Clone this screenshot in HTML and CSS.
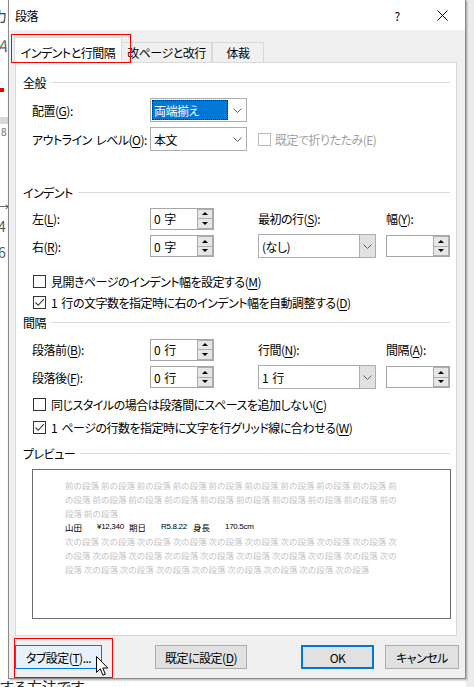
FILE: index.html
```html
<!DOCTYPE html>
<html lang="ja">
<head>
<meta charset="utf-8">
<title>段落</title>
<link rel="stylesheet" href="styles.css">
</head>
<body>
<div class="desk">
  <div class="doc">
    <span class="frag f-ka">カ</span>
    <span class="frag f-a">A</span>
    <span class="frag f-red"></span>
    <span class="frag f-bar"></span>
    <span class="frag f-8">8</span>
    <span class="frag f-arrow">→</span>
    <span class="frag f-4">4</span>
    <span class="frag f-6">6</span>
    <span class="frag f-bottom">する方法です。</span>
  </div>

  <div class="dialog">
    <div class="titlebar">
      <span class="title">段落</span>
      <div class="tb-btns">
        <span class="tb-btn help">?</span>
        <span class="tb-btn close"><svg width="11" height="11" viewBox="0 0 11 11"><path d="M0.5 0.5 L10.5 10.5 M10.5 0.5 L0.5 10.5" stroke="#000" stroke-width="1" fill="none"/></svg></span>
      </div>
    </div>

    <div class="tabs">
      <div class="tab active w1">インデントと行間隔</div>
      <div class="tab w2">改ページと改行</div>
      <div class="tab w3">体裁</div>
    </div>

    <div class="panel">
      <div class="hdr h1"><span>全般</span></div>
      <div class="row r-align">
        <span class="lbl">配置(<u>G</u>):</span>
        <div class="combo cw1 span3"><span class="selbox"><span class="sel">両端揃え</span></span><span class="arrow plain"><svg width="9" height="5" viewBox="0 0 9 5"><path d="M0.5 0.5 L4.5 4.5 L8.5 0.5" stroke="#606060" fill="none"/></svg></span></div>
      </div>
      <div class="row r-outline">
        <span class="lbl">アウトライン レベル(<u>O</u>):</span>
        <div class="combo cw1"><span class="txt">本文</span><span class="arrow plain"><svg width="9" height="5" viewBox="0 0 9 5"><path d="M0.5 0.5 L4.5 4.5 L8.5 0.5" stroke="#606060" fill="none"/></svg></span></div>
        <div class="cbi disabled span2"><span class="box"></span><span>既定で折りたたみ(E)</span></div>
      </div>

      <div class="hdr h2"><span>インデント</span></div>
      <div class="row r-left">
        <span class="lbl">左(<u>L</u>):</span>
        <div class="spin"><span class="val">0 字</span><span class="sbtns"><span class="sb up"></span><span class="sb dn"></span></span></div>
        <span class="lbl">最初の行(<u>S</u>):</span>
        <span class="lbl">幅(<u>Y</u>):</span>
      </div>
      <div class="row r-right">
        <span class="lbl">右(<u>R</u>):</span>
        <div class="spin"><span class="val">0 字</span><span class="sbtns"><span class="sb up"></span><span class="sb dn"></span></span></div>
        <div class="combo cw2"><span class="txt">(なし)</span><span class="arrow btn-arrow"><svg width="9" height="5" viewBox="0 0 9 5"><path d="M0.5 0.5 L4.5 4.5 L8.5 0.5" stroke="#606060" fill="none"/></svg></span></div>
        <div class="spin"><span class="val"></span><span class="sbtns"><span class="sb up"></span><span class="sb dn"></span></span></div>
      </div>
      <div class="cb c1"><span class="box"></span><span>見開きページのインデント幅を設定する(<u>M</u>)</span></div>
      <div class="cb c2"><span class="box"><svg width="11" height="11" viewBox="0 0 11 11"><path d="M1.5 5.5 L4.2 8.3 L9.8 2.2" stroke="#333" stroke-width="1.1" fill="none"/></svg></span><span>1 行の文字数を指定時に右のインデント幅を自動調整する(<u>D</u>)</span></div>

      <div class="hdr h3"><span>間隔</span></div>
      <div class="row r-before">
        <span class="lbl">段落前(<u>B</u>):</span>
        <div class="spin"><span class="val">0 行</span><span class="sbtns"><span class="sb up"></span><span class="sb dn"></span></span></div>
        <span class="lbl">行間(<u>N</u>):</span>
        <span class="lbl">間隔(<u>A</u>):</span>
      </div>
      <div class="row r-after">
        <span class="lbl">段落後(<u>F</u>):</span>
        <div class="spin"><span class="val">0 行</span><span class="sbtns"><span class="sb up"></span><span class="sb dn"></span></span></div>
        <div class="combo cw2"><span class="txt">1 行</span><span class="arrow btn-arrow"><svg width="9" height="5" viewBox="0 0 9 5"><path d="M0.5 0.5 L4.5 4.5 L8.5 0.5" stroke="#606060" fill="none"/></svg></span></div>
        <div class="spin"><span class="val"></span><span class="sbtns"><span class="sb up"></span><span class="sb dn"></span></span></div>
      </div>
      <div class="cb c3"><span class="box"></span><span>同じスタイルの場合は段落間にスペースを追加しない(<u>C</u>)</span></div>
      <div class="cb c4"><span class="box"><svg width="11" height="11" viewBox="0 0 11 11"><path d="M1.5 5.5 L4.2 8.3 L9.8 2.2" stroke="#333" stroke-width="1.1" fill="none"/></svg></span><span>1 ページの行数を指定時に文字を行グリッド線に合わせる(<u>W</u>)</span></div>

      <div class="hdr h4"><span>プレビュー</span></div>
      <div class="preview">
        <div class="pl">前の段落 前の段落 前の段落 前の段落 前の段落 前の段落 前の段落 前の段落 前の段落 前</div>
        <div class="pl">の段落 前の段落 前の段落 前の段落 前の段落 前の段落 前の段落 前の段落 前の段落 前の</div>
        <div class="pl">段落 前の段落</div>
        <div class="pl main"><span class="cell">山田</span><span class="cell lat">¥12,340</span><span class="cell">期日</span><span class="cell lat">R5.8.22</span><span class="cell">身長</span><span class="cell lat">170.5cm</span></div>
        <div class="pl">次の段落 次の段落 次の段落 次の段落 次の段落 次の段落 次の段落 次の段落 次の段落 次</div>
        <div class="pl">の段落 次の段落 次の段落 次の段落 次の段落 次の段落 次の段落 次の段落 次の段落 次の</div>
        <div class="pl">段落 次の段落 次の段落 次の段落 次の段落 次の段落 次の段落 次の段落 次の段落</div>
      </div>
    </div>

    <div class="buttons">
      <div class="btn b-tab hover">タブ設定(<u>T</u>)...</div>
      <div class="btn b-def">既定に設定(<u>D</u>)</div>
      <div class="btn b-ok">OK</div>
      <div class="btn b-cancel">キャンセル</div>
    </div>
  </div>

  <div class="mark mark-tab"></div>
  <div class="mark mark-btn"></div>
  <svg class="cursor" width="13" height="21" viewBox="0 0 13 21"><path d="M0.5 0.5 L0.5 16.5 L4.3 12.8 L6.9 19.2 L9.3 18.2 L6.8 12 L11.8 12 Z" fill="#fff" stroke="#000" stroke-width="1" stroke-linejoin="miter"/></svg>
</div>
</body>
</html>
```

FILE: styles.css
```css
* { box-sizing: border-box; }
html, body { margin: 0; padding: 0; }
body {
  width: 474px;
  height: 687px;
  overflow: hidden;
  background: #fff;
  font-family: "Noto Sans CJK JP", "Noto Sans", sans-serif;
  font-size: 12px;
  color: #000;
  font-feature-settings: "palt";
  letter-spacing: -0.5px;
  word-spacing: 2px;
}
u { text-decoration-thickness: 1px; text-underline-offset: 2px; }

.desk {
  position: relative;
  width: 474px;
  height: 687px;
  overflow: hidden;
  background: linear-gradient(to right, #fff 0, #fff 466px, #ececec 466px);
}

/* document fragments behind the dialog */
.frag { position: absolute; color: #444; line-height: 1; white-space: nowrap; letter-spacing: 0; word-spacing: 0; }
.f-ka { left: -7px; top: 8px; font-size: 15px; }
.f-a { left: -3px; top: 37px; font-size: 16px; font-style: italic; color: #666; }
.f-red { left: 0; top: 88px; width: 4px; height: 4px; background: #e00; }
.f-bar { left: 0; top: 117px; width: 8px; height: 7px; background: #d8d8d8; }
.f-8 { left: 1px; top: 127px; font-size: 10px; color: #666; }
.f-arrow { left: -1px; top: 202px; font-size: 10px; }
.f-4 { left: -2px; top: 219px; font-size: 14px; color: #555; }
.f-6 { left: -2px; top: 245px; font-size: 14px; color: #555; }
.f-bottom { left: 0; top: 679px; font-size: 15px; color: #222; }

/* dialog window */
.dialog {
  position: absolute;
  left: 8px;
  top: 0;
  width: 458px;
  height: 679px;
  background: #f0f0f0;
  border: 1px solid #8a8a8a;
  border-top: none;
  box-shadow: 1px 1px 2px rgba(0, 0, 0, 0.35);
  display: flex;
  flex-direction: column;
}
.titlebar {
  height: 30px;
  flex: none;
  background: #fff;
  display: flex;
  align-items: center;
  justify-content: space-between;
  padding-left: 6px;
}
.title { font-size: 12px; }
.tb-btns { display: flex; height: 30px; }
.tb-btn { display: flex; align-items: center; justify-content: center; height: 30px; }
.help { width: 46px; font-size: 12px; }
.close { width: 45px; }

/* tabs */
.tabs {
  height: 32px;
  flex: none;
  display: flex;
  align-items: flex-end;
  padding-left: 5px;
}
.tab {
  height: 20px;
  line-height: 19px;
  border: 1px solid #d9d9d9;
  border-bottom: none;
  background: #f0f0f0;
  text-align: center;
  white-space: nowrap;
}
.tab.active {
  height: 26px;
  padding-top: 5px;
  margin-bottom: -1px;
  background: #fff;
  position: relative;
  z-index: 1;
}
.w1 { width: 108px; }
.w2 { width: 90px; border-left: none; }
.w3 { width: 52px; }

/* tab panel */
.panel {
  flex: none;
  margin-left: 6px;
  width: 442px;
  height: 574px;
  background: #fff;
  border: 1px solid #d9d9d9;
  padding-right: 6px;
}
.hdr {
  display: flex;
  align-items: center;
  height: 20px;
  padding-left: 7px;
  white-space: nowrap;
}
.hdr::after {
  content: "";
  flex: 1;
  height: 1px;
  background: #dcdcdc;
  margin-left: 5px;
}
.h1 { margin-top: 9px; }
.h2 { margin-top: 31px; }
.h3 { margin-top: 0; }
.h4 { margin-top: 6px; }

.row {
  display: grid;
  grid-template-columns: 118px 108px 128px 64px;
  align-items: center;
  padding-left: 16px;
  white-space: nowrap;
}
.lbl { white-space: nowrap; }
.span2 { grid-column: span 2; }
.span3 { grid-column: span 3; }
.r-align { margin-top: 6px; height: 24px; }
.r-outline { margin-top: 5px; height: 24px; }
.r-left { margin-top: 5px; height: 23px; }
.r-right { margin-top: 4px; height: 24px; }
.r-before { margin-top: 6px; height: 23px; }
.r-after { margin-top: 4px; height: 24px; }

/* combo boxes */
.combo {
  display: flex;
  height: 24px;
  border: 1px solid #adadad;
  background: #fff;
}
.cw1 { width: 97px; }
.cw2 { width: 118px; }
.combo .txt { flex: 1; display: flex; align-items: center; padding-left: 3px; }
.selbox { flex: 1; padding: 1px 0 1px 1px; display: flex; }
.sel {
  flex: 1;
  background: #0078d7;
  color: #fff;
  display: flex;
  align-items: center;
  padding-left: 2px;
  outline: 1px dotted #222;
  outline-offset: -1px;
}
.arrow { width: 18px; display: flex; align-items: center; justify-content: center; }
.btn-arrow { width: 16px; background: #e1e1e1; border-left: 1px solid #adadad; }

/* spinners */
.spin {
  width: 64px;
  height: 22px;
  border: 1px solid #a6a6a6;
  background: #fff;
  display: flex;
  justify-content: space-between;
  padding-left: 3px;
}
.val { display: flex; align-items: center; }
.sbtns { display: flex; flex-direction: column; width: 16px; }
.sb {
  flex: 1;
  border: 1px solid #adadad;
  background: #e6e6e6;
  display: flex;
  align-items: center;
  justify-content: center;
}
.sb.up { border-bottom: none; }
.sb.up::after {
  content: "";
  border-left: 3px solid transparent;
  border-right: 3px solid transparent;
  border-bottom: 3px solid #000;
}
.sb.dn::after {
  content: "";
  border-left: 3px solid transparent;
  border-right: 3px solid transparent;
  border-top: 3px solid #000;
}

/* checkboxes */
.cb, .cbi {
  display: flex;
  align-items: center;
  height: 20px;
  white-space: nowrap;
}
.cb { padding-left: 17px; }
.box {
  width: 13px;
  height: 13px;
  border: 1px solid #333;
  background: #fff;
  margin-right: 5px;
  display: flex;
  align-items: center;
  justify-content: center;
  flex: none;
}
.cbi .box { margin-right: 4px; }
.disabled { color: #a0a0a0; }
.disabled .box { border-color: #bcbcbc; }
.c1 { margin-top: 13px; }
.c2 { margin-top: 1px; }
.c3 { margin-top: 5px; }
.c4 { margin-top: 3px; }

/* preview */
.preview {
  margin: 6px 0 0 16px;
  width: 419px;
  height: 150px;
  border: 1px solid #6d6d6d;
  background: #fff;
  padding: 8px 0 0 32px;
  font-size: 8.5px;
  line-height: 14px;
  color: #c4c4c4;
  font-feature-settings: normal;
  letter-spacing: 0;
  word-spacing: 0;
}
.pl { white-space: nowrap; height: 14px; }
.main { color: #000; display: flex; }
.cell { width: 32px; flex: none; white-space: nowrap; }
.lat { font-family: "Liberation Sans", sans-serif; font-size: 8px; letter-spacing: -0.3px; }

/* bottom buttons */
.buttons {
  flex: none;
  display: flex;
  margin: 9px 0 0 6px;
  height: 24px;
}
.btn {
  height: 24px;
  border: 1px solid #adadad;
  background: #e1e1e1;
  display: flex;
  align-items: center;
  justify-content: center;
  white-space: nowrap;
}
.b-tab { width: 87px; }
.hover { background: #e5f1fb; border-color: #0078d7; }
.b-def { width: 92px; margin-left: 53px; }
.b-ok { width: 73px; margin-left: 54px; border: 2px solid #0078d7; }
.b-cancel { width: 74px; margin-left: 11px; }

/* annotation overlays */
.mark { position: absolute; border: 1px solid #f00; z-index: 5; }
.mark-tab { left: 11px; top: 34px; width: 120px; height: 29px; }
.mark-btn { left: 14px; top: 638px; width: 99px; height: 40px; }
.cursor { position: absolute; left: 96px; top: 656px; z-index: 6; }
```
